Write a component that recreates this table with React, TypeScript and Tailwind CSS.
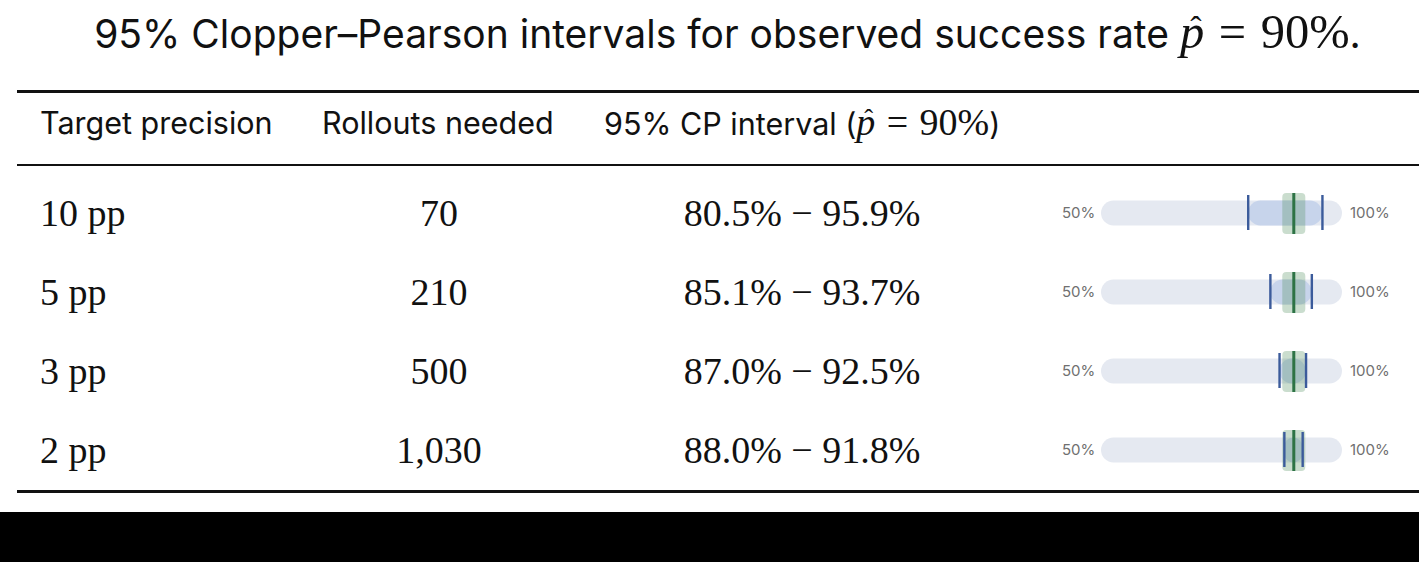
import React from 'react';

const rows = [
  { target: '10 pp', n: '70', lo: 80.5, hi: 95.9 },
  { target: '5 pp', n: '210', lo: 85.1, hi: 93.7 },
  { target: '3 pp', n: '500', lo: 87.0, hi: 92.5 },
  { target: '2 pp', n: '1,030', lo: 88.0, hi: 91.8 },
];

const sans = "font-['Inter',sans-serif]";
const serif = "font-['Liberation_Serif',serif]";

// p with a hat, hat placed over the letter
function PHat() {
  return (
    <span className="relative inline-block italic leading-none">
      p
      <span className="absolute left-[0.3em] top-[0.12em] text-[0.7em] leading-none not-italic">ˆ</span>
    </span>
  );
}

function MathEq() {
  return (
    <>
      <PHat />
      <span className="mx-[0.3em]">=</span>
      90%
    </>
  );
}

function IntervalBar({ lo, hi }: { lo: number; hi: number }) {
  const W = 241;
  const x = (v: number) => ((v - 50) / 50) * W;
  const fw = x(hi) - x(lo);
  const r = Math.min(12.5, fw / 2);
  const c = x(90);
  return (
    <div className={`flex items-center ${sans} text-[15px] text-[#707070]`}>
      <span className="w-[39px]">50%</span>
      <svg width={W} height={41} className="overflow-visible">
        <rect x={0} y={7.5} width={W} height={25} rx={12.5} fill="#e5e9f1" />
        <rect x={x(lo)} y={7.5} width={fw} height={25} rx={r} fill="#c7d4eb" />
        <rect x={c - 11.5} y={0} width={23} height={41} rx={4} fill="#4f8f5c" fillOpacity={0.3} />
        <rect x={c - 1.5} y={0} width={3} height={41} fill="#2d7345" />
        <rect x={x(lo) - 1} y={2} width={2.4} height={35} fill="#3b5b9b" />
        <rect x={x(hi) - 1} y={2} width={2.4} height={35} fill="#3b5b9b" />
      </svg>
      <span className="pl-[8px]">100%</span>
    </div>
  );
}

export default function App() {
  return (
    <div className="w-[1419px] h-[562px] bg-black overflow-hidden">
      <div className="h-[512px] bg-white text-[#111]">
        <div className={`pl-[36px] pt-[5px] text-center ${sans} text-[39px] leading-[54px] whitespace-nowrap`}>
          95% Clopper–Pearson intervals for observed success rate{' '}
          <span className={`${serif} text-[48.5px]`}>
            <MathEq />
          </span>
          .
        </div>
        <div className="ml-[17px] mt-[29px] w-[1402px]">
          <div
            className={`grid grid-cols-[281px_282px_444px_395px] h-[76px] pb-[12px] items-center border-t-[3px] border-b-[2px] border-[#111] ${sans} text-[30.5px] whitespace-nowrap`}
          >
            <div className="pl-[23px]">Target precision</div>
            <div className="pl-[24px]">Rollouts needed</div>
            <div className="pl-[24px]">
              95% CP interval (
              <span className={`${serif} text-[38px]`}>
                <MathEq />
              </span>
              )
            </div>
            <div />
          </div>
          <div className="pt-[8px] border-b-[3px] border-[#111]">
            {rows.map((r) => (
              <div
                key={r.target}
                className={`grid grid-cols-[281px_282px_444px_395px] h-[79px] items-center ${serif} text-[38px]`}
              >
                <div className="pl-[23px]">{r.target}</div>
                <div className="text-center">{r.n}</div>
                <div className="text-center">
                  {r.lo.toFixed(1)}% − {r.hi.toFixed(1)}%
                </div>
                <div className="pl-[38px]">
                  <IntervalBar lo={r.lo} hi={r.hi} />
                </div>
              </div>
            ))}
          </div>
        </div>
      </div>
    </div>
  );
}
